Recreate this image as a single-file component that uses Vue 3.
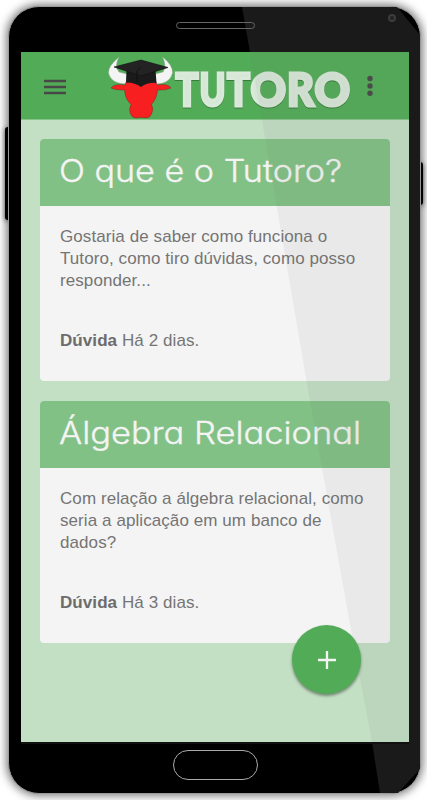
<script setup>
const cards = [
  {
    title: 'O que é o Tutoro?',
    text: 'Gostaria de saber como funciona o Tutoro, como tiro dúvidas, como posso responder...',
    age: 'Há 2 dias.',
    width: 283,
  },
  {
    title: 'Álgebra Relacional',
    text: 'Com relação a álgebra relacional, como seria a aplicação em um banco de dados?',
    age: 'Há 3 dias.',
    width: 302,
  },
]
const letters = [
  { c: 'T', x: 175.5, w: 23 },
  { c: 'U', x: 199.5, w: 26 },
  { c: 'T', x: 227, w: 23 },
  { c: 'O', x: 250.5, w: 35.5 },
  { c: 'R', x: 287, w: 27 },
  { c: 'O', x: 314.5, w: 35.5 },
]
</script>

<template>
  <div class="stage">
    <i class="side left"></i>
    <i class="side right"></i>
    <div class="phone">
      <svg class="shine" width="427" height="800" viewBox="0 0 427 800">
        <path d="M242 7H397L420 35V769L398 793H380L372 742L353 641L308 390L262 120L250 52Z" />
      </svg>
      <div class="top">
        <i class="speaker"></i>
        <i class="camera"></i>
      </div>
      <main class="screen">
        <header class="bar">
          <svg width="388" height="68" viewBox="21 52 388 68">
            <path class="menu" d="M44 81h22M44 87h22M44 93h22" />
            <g>
              <path class="horn" d="M119 57Q108 66 108.500 73Q111 84 127 84L127 74L119 72Q114 66 119 57Z" />
              <path class="horn" d="M162.500 57Q173 65 172.500 73Q170 84 155 84L155 74L163 72Q167 66 162.500 57Z" />
              <path class="face" d="M111 88Q114 83.500 125 85L126 82H156L157 85Q168 83 171 88Q166 90.500 157.500 90Q157 97 154 101L151.500 104.500Q154 109 151.500 114Q150 118 146 118Q141.500 117 136 118Q132 118 130.500 114Q128.500 109 131 104.500L128 101Q125 97 124.500 90Q116 90.500 111 88Z" />
              <path class="cap-base" d="M126.500 70L126 82.500Q134 82 141 87Q148 82 156.500 83L155.500 70L141 75Z" />
              <path class="cap-top" d="M114 67L141 60L168 67.500L141 76Z" />
              <path class="tassel" d="M141 67L137 71V82" />
            </g>
            <g class="logo">
              <text
                v-for="l in letters"
                :key="l.x"
                :x="l.x"
                y="105.700"
                :textLength="l.w"
                lengthAdjust="spacingAndGlyphs"
              >{{ l.c }}</text>
            </g>
            <g class="dots">
              <circle cx="370" cy="78.500" r="2.700" />
              <circle cx="370" cy="86" r="2.700" />
              <circle cx="370" cy="93.300" r="2.700" />
            </g>
          </svg>
        </header>
        <section class="list">
          <article v-for="card in cards" :key="card.title" class="card">
            <h2>
              <svg width="310" height="66" viewBox="0 0 310 66">
                <text x="-1" y="42.500" :textLength="card.width" lengthAdjust="spacingAndGlyphs">{{ card.title }}</text>
              </svg>
            </h2>
            <div class="body">
              <p>{{ card.text }}</p>
              <p><b>Dúvida</b> {{ card.age }}</p>
            </div>
          </article>
        </section>
        <svg class="glare" width="388" height="690" viewBox="21 52 388 690">
          <path d="M250 52H409V742H372L353 641L308 390L262 120Z" />
        </svg>
      </main>
      <div class="bottom"><i class="home"></i></div>
    </div>
    <button class="fab" aria-label="Adicionar">
      <svg width="20" height="20" viewBox="0 0 20 20"><path d="M1 10H19M10 1V19" /></svg>
    </button>
  </div>
</template>

<style>
body {
  overflow: hidden;
  background: #fff;
}
</style>

<style scoped>
.stage {
  position: relative;
  box-sizing: border-box;
  width: 427px;
  height: 800px;
  padding: 6px 6px 6px 8px;
  overflow: hidden;
  font-family: "Liberation Sans", Arial, sans-serif;
}
.phone {
  position: relative;
  box-sizing: border-box;
  display: flex;
  flex-direction: column;
  width: 413px;
  height: 788px;
  border: 1px solid #999;
  border-radius: 31px;
  background: #000;
  box-shadow: 0 0 8px 2px rgba(0, 0, 0, 0.5);
}
.shine {
  position: absolute;
  left: -9px;
  top: -7px;
  fill: #1a1a1a;
}
.side {
  position: absolute;
  width: 6px;
  background: #000;
  border-radius: 3px;
  box-shadow: 0 1px 5px rgba(0, 0, 0, 0.6);
}
.left {
  left: 5px;
  top: 127px;
  height: 93px;
}
.right {
  left: 417px;
  top: 162px;
  height: 43px;
}
.top {
  position: relative;
  height: 45px;
  flex: none;
}
.speaker {
  position: absolute;
  box-sizing: border-box;
  left: 167px;
  top: 15px;
  width: 79px;
  height: 7px;
  border: 1px solid #666;
  border-radius: 3.5px;
}
.camera {
  position: absolute;
  box-sizing: border-box;
  left: 379px;
  top: 7px;
  width: 8px;
  height: 8px;
  border: 2px solid #3c3c3c;
  border-radius: 50%;
  background: #222;
}
.screen {
  position: relative;
  width: 388px;
  height: 690px;
  flex: none;
  margin-left: 12px;
  background: #c3dfc4;
  box-shadow: 0 2px 0 #111;
}
.bar {
  height: 67px;
  background: #52ac57;
  border-bottom: 1px solid #86c48a;
}
.bar svg {
  display: block;
}
.menu {
  stroke: #484848;
  stroke-width: 2.4;
}
.horn {
  fill: #f4f4f4;
  stroke: #8da58e;
  stroke-width: 0.5;
}
.face {
  fill: #f81f20;
  stroke: #713126;
  stroke-width: 0.5;
}
.cap-base {
  fill: #1b1b1b;
}
.cap-top {
  fill: #232323;
  stroke: #111;
  stroke-width: 0.6;
}
.tassel {
  fill: none;
  stroke: #111;
  stroke-width: 1;
}
.logo {
  font-family: Lato, sans-serif;
  font-weight: 900;
  font-size: 45px;
  fill: #d6e7d7;
  stroke: #d9e9da;
  stroke-width: 3;
  filter: drop-shadow(0.5px 1px 0.5px #397b3d);
}
.dots {
  fill: #484848;
}
.list {
  display: flex;
  flex-direction: column;
  gap: 20px;
  padding: 19px 19px 0;
}
.card {
  width: 350px;
  height: 242px;
  border-radius: 4px;
  overflow: hidden;
  background: #f4f4f4;
}
h2 {
  box-sizing: border-box;
  height: 67px;
  margin: 0;
  padding-left: 20px;
  background: #82c185;
}
h2 svg {
  display: block;
  overflow: visible;
}
h2 text {
  font-family: Inter, sans-serif;
  font-weight: 300;
  font-size: 30.5px;
  font-feature-settings: "cv11";
  fill: #f4f4f4;
  stroke: #f4f4f4;
  stroke-width: 0.35;
}
.body {
  padding: 20px 19px 0 20px;
}
p {
  margin: 0 0 38px;
  font-size: 17px;
  letter-spacing: 0.08px;
  line-height: 22px;
  color: #757575;
}
b {
  color: #6c6c6c;
}
.bottom {
  position: relative;
  display: flex;
  padding: 8px 0 0 164px;
}
.home {
  box-sizing: border-box;
  width: 85px;
  height: 30px;
  border: 1px solid #aaa;
  border-radius: 15px;
}
.glare {
  position: absolute;
  left: 0;
  top: 0;
  fill: rgba(118, 118, 118, 0.08);
  pointer-events: none;
}
.fab {
  position: absolute;
  left: 292px;
  top: 625px;
  display: flex;
  align-items: center;
  justify-content: center;
  width: 69px;
  height: 69px;
  padding: 0;
  border: 0;
  border-radius: 50%;
  background: #52ac57;
  box-shadow: 0 2px 3px rgba(0, 0, 0, 0.4);
}
.fab path {
  fill: none;
  stroke: #f4f4f4;
  stroke-width: 2.3;
}
</style>
